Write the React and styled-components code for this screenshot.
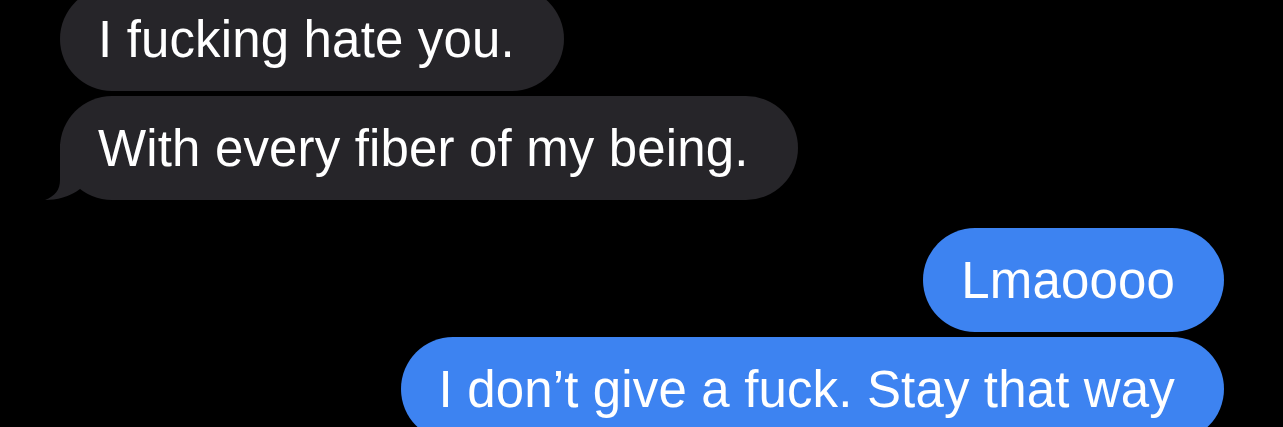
import React from "react";
import styled, { createGlobalStyle } from "styled-components";

const GlobalStyle = createGlobalStyle`
  html, body {
    margin: 0;
    padding: 0;
    background: #000;
  }
  body {
    overflow: hidden;
  }
`;

const Screen = styled.div`
  width: 1283px;
  height: 427px;
  overflow: hidden;
  background: #000;
  font-family: "Liberation Sans", Arial, sans-serif;
`;

const Thread = styled.div`
  display: flex;
  flex-direction: column;
  margin-top: -13px;
  padding: 0 59px 0 60px;
  gap: 28px;
`;

const Group = styled.div`
  display: flex;
  flex-direction: column;
  gap: 5px;
  align-items: ${({ $mine }) => ($mine ? "flex-end" : "flex-start")};
`;

const Bubble = styled.div`
  position: relative;
  box-sizing: border-box;
  height: 104px;
  padding: 0 49px 0 38px;
  display: flex;
  align-items: center;
  border-radius: 52px;
  background: ${({ $mine }) => ($mine ? "#3d83f1" : "#262529")};
  color: #fff;
  font-size: 51px;
  line-height: 61px;
  letter-spacing: 0.15px;
  white-space: nowrap;
`;

// little speech tail hanging off the bottom-left corner
const Tail = styled.svg`
  position: absolute;
  left: -16px;
  bottom: 0;
  width: 48px;
  height: 56px;
`;

function Message({ mine, tail, children }) {
  return (
    <Bubble $mine={mine}>
      {tail && (
        <Tail viewBox="0 0 48 56">
          <path
            d="M16 0 L16 36 C16 46 11 52 1 56 C12 56 26 53 36 45 L36 0 Z"
            fill={mine ? "#3d83f1" : "#262529"}
          />
        </Tail>
      )}
      {children}
    </Bubble>
  );
}

export default function App() {
  return (
    <Screen>
      <GlobalStyle />
      <Thread>
        <Group>
          <Message>I fucking hate you.</Message>
          <Message tail>With every fiber of my being.</Message>
        </Group>
        <Group $mine>
          <Message mine>Lmaoooo</Message>
          <Message mine>I don’t give a fuck. Stay that way</Message>
        </Group>
      </Thread>
    </Screen>
  );
}
